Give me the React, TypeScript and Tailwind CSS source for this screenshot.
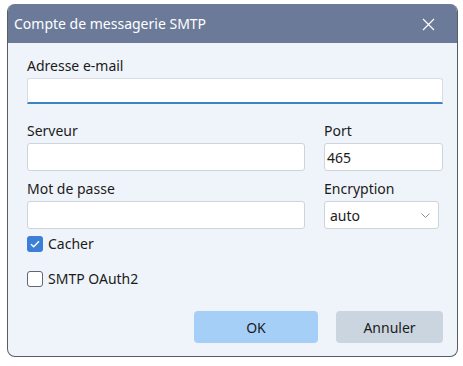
import React from "react";

export default function App() {
  return (
    <div
      className="w-[463px] h-[366px] bg-white pt-[4px] pl-[7px]"
      style={{ fontFamily: '"Noto Sans", "Open Sans", sans-serif' }}
    >
      <div className="w-[451px] h-[353px] rounded-[8px] border border-t-0 border-[#585c63] overflow-hidden flex flex-col bg-[#eff4fa]">
        <div className="h-[39px] shrink-0 bg-[#6b7a99] flex items-center justify-between pl-[6px] pr-[22px]">
          <span className="text-[14px] text-white leading-[20px]">Compte de messagerie SMTP</span>
          <svg width="13" height="13" viewBox="0 0 13 13" className="mt-[1px]">
            <path d="M1 1 L12 12 M12 1 L1 12" stroke="#ffffff" strokeWidth="1.2" fill="none" />
          </svg>
        </div>
        <div className="flex flex-col pl-[19px] pr-[14px] text-[14px] text-[#1b1b1b]">
          <div className="mt-[13px]">
            <div className="h-[20px] leading-[20px] mb-[2px]">Adresse e-mail</div>
            <div className="h-[26px] bg-white border border-[#d9dde3] border-b-2 border-b-[#3d83c3] rounded-t-[3px]" />
          </div>
          <div className="mt-[17px] flex gap-[19px]">
            <div className="w-[278px] flex flex-col">
              <div className="h-[20px] leading-[20px] mb-[2px]">Serveur</div>
              <div className="h-[28px] bg-white border border-[#cfd4db] rounded-[3px]" />
              <div className="mt-[8px] h-[20px] leading-[20px] mb-[2px]">Mot de passe</div>
              <div className="h-[28px] bg-white border border-[#cfd4db] rounded-[3px]" />
            </div>
            <div className="w-[119px] flex flex-col">
              <div className="h-[20px] leading-[20px] mb-[2px]">Port</div>
              <div className="h-[28px] bg-white border border-[#cfd4db] rounded-[3px] flex items-center pl-[2px]">
                465
              </div>
              <div className="mt-[8px] h-[20px] leading-[20px] mb-[2px]">Encryption</div>
              <div className="w-[115px] h-[28px] bg-white border border-[#cfd4db] rounded-[3px] flex items-center justify-between pl-[5px] pr-[8px]">
                <span>auto</span>
                <svg width="9" height="5" viewBox="0 0 9 5">
                  <path d="M0.5 0.5 L4.5 4.5 L8.5 0.5" stroke="#8a8f98" strokeWidth="1" fill="none" />
                </svg>
              </div>
            </div>
          </div>
          <div className="mt-[5px] h-[20px] flex items-center gap-[5px]">
            <div className="w-[16px] h-[16px] rounded-[3px] bg-[#3b7fd8] flex items-center justify-center">
              <svg width="10" height="8" viewBox="0 0 10 8">
                <path d="M1 4.2 L3.7 6.8 L9 1.2" stroke="#ffffff" strokeWidth="1.4" fill="none" />
              </svg>
            </div>
            <span className="leading-[20px]">Cacher</span>
          </div>
          <div className="mt-[15px] h-[20px] flex items-center gap-[5px]">
            <div className="w-[16px] h-[16px] rounded-[3px] bg-white border-[1.5px] border-[#5f6678]" />
            <span className="leading-[20px]">SMTP OAuth2</span>
          </div>
          <div className="mt-[22px] flex justify-end gap-[18px]">
            <div className="w-[124px] h-[32px] rounded-[4px] bg-[#a6cff8] flex items-center justify-center">
              OK
            </div>
            <div className="w-[107px] h-[32px] rounded-[4px] bg-[#cbd5df] flex items-center justify-center">
              Annuler
            </div>
          </div>
        </div>
      </div>
    </div>
  );
}
